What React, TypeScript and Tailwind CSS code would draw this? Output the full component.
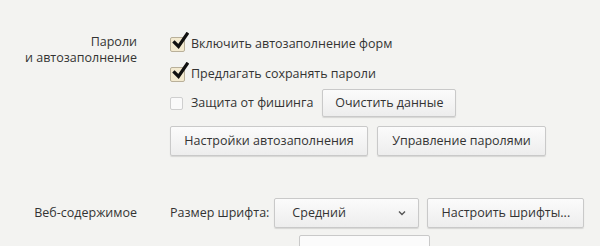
import React from 'react';

const font = { fontFamily: '"Open Sans", "Noto Sans", sans-serif' };

const CheckMark: React.FC = () => (
  <svg className="absolute -top-[6px] left-[1px]" width="17" height="18" viewBox="0 0 17 18">
    <path d="M2.5 10.5 L6.5 14.5 L15 2" fill="none" stroke="#111" strokeWidth="3.2" strokeLinecap="square" />
  </svg>
);

const Checkbox: React.FC<{ checked?: boolean; label: string }> = ({ checked, label }) => (
  <label className="flex items-center gap-[6px] whitespace-nowrap">
    <span
      className={
        checked
          ? 'relative w-[15px] h-[15px] border border-[#b9b09a] bg-[#f3ead0] rounded-[2px]'
          : 'relative w-[13px] h-[13px] border border-[#cfcfcf] bg-[#fafafa] rounded-[2px]'
      }
    >
      {checked && <CheckMark />}
    </span>
    <span className={checked ? '' : 'ml-[2px]'}>{label}</span>
  </label>
);

const Button: React.FC<{ children: React.ReactNode; className?: string }> = ({ children, className }) => (
  <button
    className={
      'h-[28px] px-0 whitespace-nowrap text-center border border-[#c9c9c9] rounded-[2px] bg-gradient-to-b from-[#fbfbfb] to-[#ededed] shadow-[0_1px_1px_rgba(0,0,0,0.12)] text-[#333] ' +
      (className || '')
    }
  >
    {children}
  </button>
);

export default function App() {
  return (
    <div className="w-[600px] h-[246px] overflow-hidden bg-[#f3f3f1] text-[#333] text-[12.5px]" style={font}>
      <div className="grid grid-cols-[137px_1fr] gap-x-[33px] pt-[34px]">
        <div className="text-right leading-[16px]">
          <div>Пароли</div>
          <div>и автозаполнение</div>
        </div>
        <div className="flex flex-col">
          <div className="h-[21px] flex items-center">
            <Checkbox checked label="Включить автозаполнение форм" />
          </div>
          <div className="h-[21px] mt-[9px] flex items-center">
            <Checkbox checked label="Предлагать сохранять пароли" />
          </div>
          <div className="mt-[4px] flex items-center gap-[9px]">
            <Checkbox label="Защита от фишинга" />
            <Button className="w-[134px]">Очистить данные</Button>
          </div>
          <div className="mt-[9px] flex gap-[9px]">
            <Button className="w-[198px] h-[30px]">Настройки автозаполнения</Button>
            <Button className="w-[169px] h-[30px]">Управление паролями</Button>
          </div>
        </div>
      </div>

      <div className="grid grid-cols-[137px_1fr] gap-x-[33px] mt-[42px]">
        <div className="text-right leading-[30px] whitespace-nowrap">Веб-содержимое</div>
        <div className="flex flex-col">
          <div className="flex items-center">
            <span className="whitespace-nowrap">Размер шрифта:</span>
            <div className="ml-[5px] w-[145px] h-[30px] flex items-center justify-between pl-[17px] pr-[12px] border border-[#c9c9c9] rounded-[2px] bg-gradient-to-b from-[#fbfbfb] to-[#ededed] shadow-[0_1px_1px_rgba(0,0,0,0.12)]">
              <span>Средний</span>
              <svg width="8" height="6" viewBox="0 0 8 6">
                <path d="M1 1.5 L4 4.5 L7 1.5" fill="none" stroke="#555" strokeWidth="1.4" />
              </svg>
            </div>
            <Button className="ml-[8px] w-[157px] h-[30px]">Настроить шрифты...</Button>
          </div>
          <div className="ml-[129px] mt-[7px] w-[131px] h-[30px] border border-[#c9c9c9] rounded-[2px] bg-[#fbfbfb]" />
        </div>
      </div>
    </div>
  );
}
